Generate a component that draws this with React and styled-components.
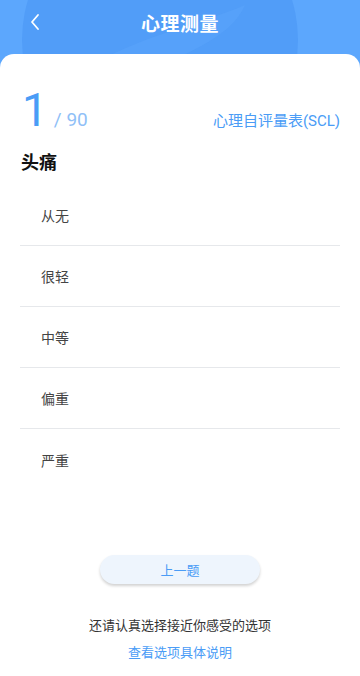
import styled, { createGlobalStyle } from 'styled-components';

const GlobalStyle = createGlobalStyle`
  html, body { margin: 0; padding: 0; }
  body {
    font-family: Roboto, "Noto Sans CJK SC", sans-serif;
    background: #fff;
  }
`;

const Page = styled.div`
  width: 360px;
  height: 676px;
  position: relative;
  overflow: hidden;
  background: #5ca7fd;
  display: flex;
  flex-direction: column;
`;

const Decor = styled.svg`
  position: absolute;
  left: 0;
  top: 0;
  width: 360px;
  height: 80px;
`;

const Header = styled.div`
  position: relative;
  height: 44px;
  display: flex;
  align-items: center;
  justify-content: center;
  flex-shrink: 0;
`;

const Back = styled.div`
  position: absolute;
  left: 28px;
  top: 12px;
  width: 14px;
  height: 20px;
`;

const Title = styled.div`
  color: #fff;
  font-size: 19px;
  font-weight: 700;
  letter-spacing: 0.5px;
`;

const Card = styled.div`
  position: relative;
  margin-top: 10px;
  flex: 1;
  background: #fff;
  border-radius: 14px 14px 0 0;
  padding: 33px 20px 0 20px;
  display: flex;
  flex-direction: column;
`;

const Progress = styled.div`
  display: flex;
  align-items: baseline;
  justify-content: space-between;
  padding-left: 2px;
`;

const Count = styled.div`
  display: flex;
  align-items: baseline;
`;

const Current = styled.span`
  font-size: 46px;
  line-height: 46px;
  color: #4a9cf6;
`;

const Total = styled.span`
  font-size: 19px;
  color: #8fc0f7;
  margin-left: 6px;
`;

const Scale = styled.span`
  font-size: 15px;
  color: #4a9cf6;
`;

const Question = styled.div`
  font-size: 18px;
  font-weight: 700;
  color: #111;
  margin-top: 15px;
  padding-left: 1px;
`;

const Options = styled.div`
  margin-top: 11px;
  display: flex;
  flex-direction: column;
`;

const Option = styled.div`
  height: 61px;
  display: flex;
  align-items: center;
  padding-left: 21px;
  font-size: 14px;
  color: #444;
  border-bottom: ${(p) => (p.$last ? 'none' : '1px solid #e6e8eb')};
  box-sizing: border-box;
`;

const Footer = styled.div`
  margin-top: auto;
  padding-bottom: 15px;
  display: flex;
  flex-direction: column;
  align-items: center;
`;

const PrevButton = styled.button`
  width: 160px;
  height: 29px;
  border: none;
  border-radius: 15px;
  background: #eef5fd;
  box-shadow: 0 2px 3px rgba(0, 0, 0, 0.18);
  color: #4a9cf6;
  font-size: 13px;
  font-family: inherit;
  padding: 0;
`;

const Hint = styled.div`
  margin-top: 31px;
  font-size: 13px;
  color: #333;
`;

const Link = styled.div`
  margin-top: 8px;
  font-size: 13px;
  color: #4a9cf6;
`;

const options = ['从无', '很轻', '中等', '偏重', '严重'];

export default function App() {
  return (
    <>
      <GlobalStyle />
      <Page>
        <Decor viewBox="0 0 360 80">
          <circle cx="160" cy="40" r="138" fill="#519df8" />
          <path d="M70 80 C120 40 200 25 245 5 C230 40 180 55 130 80 Z" fill="#5ba6fc" opacity="0.5" />
        </Decor>
        <Header>
          <Back>
            <svg width="14" height="20" viewBox="0 0 14 20">
              <path d="M10 3 L4 10 L10 17" fill="none" stroke="#fff" strokeWidth="1.8" strokeLinecap="round" strokeLinejoin="round" />
            </svg>
          </Back>
          <Title>心理测量</Title>
        </Header>
        <Card>
          <Progress>
            <Count>
              <Current>1</Current>
              <Total>/ 90</Total>
            </Count>
            <Scale>心理自评量表(SCL)</Scale>
          </Progress>
          <Question>头痛</Question>
          <Options>
            {options.map((o, i) => (
              <Option key={o} $last={i === options.length - 1}>{o}</Option>
            ))}
          </Options>
          <Footer>
            <PrevButton>上一题</PrevButton>
            <Hint>还请认真选择接近你感受的选项</Hint>
            <Link>查看选项具体说明</Link>
          </Footer>
        </Card>
      </Page>
    </>
  );
}
